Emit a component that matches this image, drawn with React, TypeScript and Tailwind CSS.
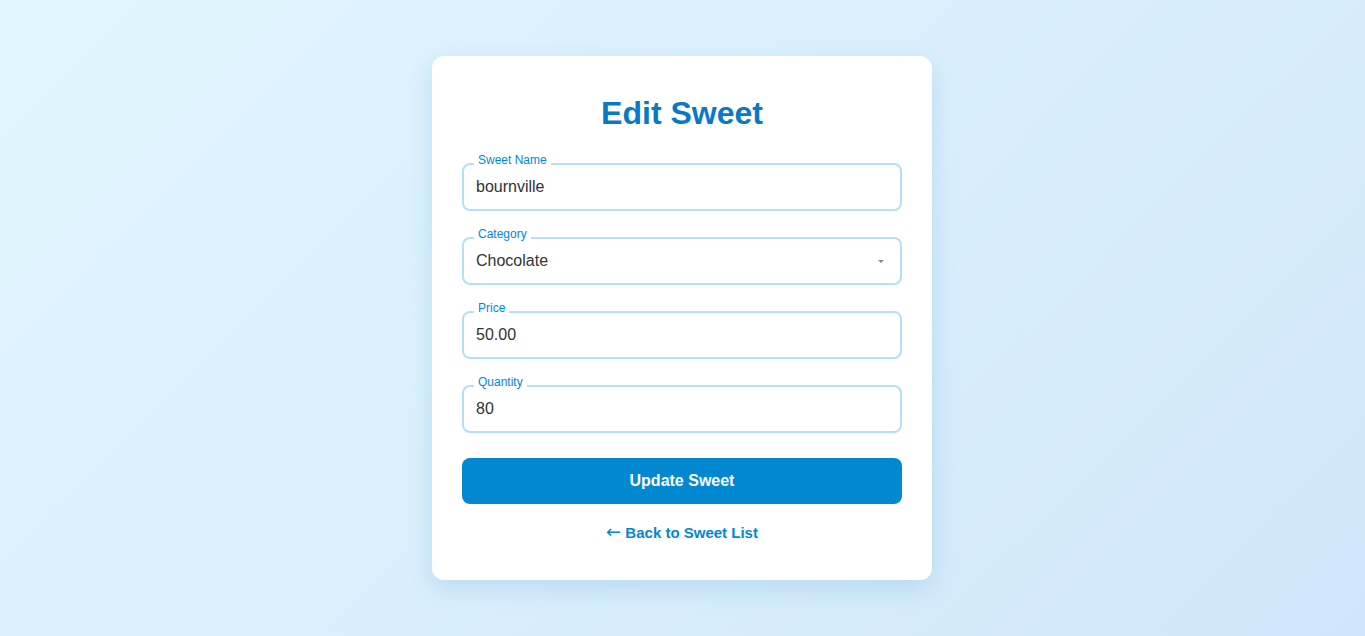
import React from 'react';

const fields = [
  { label: 'Sweet Name', value: 'bournville' },
  { label: 'Price', value: '50.00' },
  { label: 'Quantity', value: '80' },
];

const Field = ({ label, children }: { label: string; children: React.ReactNode }) => (
  <div className="relative">
    <span className="absolute z-10 -top-[10px] left-[12px] bg-white px-1 text-[12px] leading-[14px] text-[#0288d1]">
      {label}
    </span>
    {children}
  </div>
);

const inputClass =
  'w-full h-[48px] rounded-lg border-2 border-[#b3e0f5] bg-white px-3 text-[16px] text-[#333] outline-none';

export default function App() {
  return (
    <div
      className="min-h-screen w-full flex justify-center bg-[linear-gradient(135deg,#e1f6fe,#d0e7fb)] pt-[56px] pr-[1px]"
      style={{ fontFamily: '"Liberation Sans", Arial, sans-serif' }}
    >
      <div className="w-[500px] h-[524px] bg-white rounded-xl shadow-[0_8px_24px_rgba(2,119,189,0.15)] px-[30px] pt-[38px]">
        <h1 className="text-center text-[32px] leading-[38px] font-bold text-[#0a78c6]">Edit Sweet</h1>

        <form className="mt-[31px] flex flex-col gap-[26px]" onSubmit={(e) => e.preventDefault()}>
          <Field label="Sweet Name">
            <input className={inputClass} defaultValue={fields[0].value} />
          </Field>

          <Field label="Category">
            <div className="relative">
              <select className={inputClass + ' appearance-none'} defaultValue="Chocolate">
                <option>Chocolate</option>
                <option>Candy</option>
                <option>Pastry</option>
              </select>
              <span className="pointer-events-none absolute right-[18px] top-[23px] w-0 h-0 border-l-[3px] border-r-[3px] border-t-[3px] border-l-transparent border-r-transparent border-t-[#888]" />
            </div>
          </Field>

          <Field label="Price">
            <input className={inputClass} defaultValue={fields[1].value} />
          </Field>

          <Field label="Quantity">
            <input className={inputClass} defaultValue={fields[2].value} />
          </Field>

          <div className="flex flex-col">
            <button
              type="submit"
              className="-mt-[1px] h-[46px] w-full rounded-lg bg-[#0288d1] text-white text-[16px] font-bold"
            >
              Update Sweet
            </button>
            <a href="#" className="mt-[19px] text-center text-[15px] leading-[18px] font-bold text-[#0288d1]">
              <span className="text-[18px] font-normal" style={{ fontFamily: '"DejaVu Sans", sans-serif' }}>
                ←
              </span>{' '}
              Back to Sweet List
            </a>
          </div>
        </form>
      </div>
    </div>
  );
}
